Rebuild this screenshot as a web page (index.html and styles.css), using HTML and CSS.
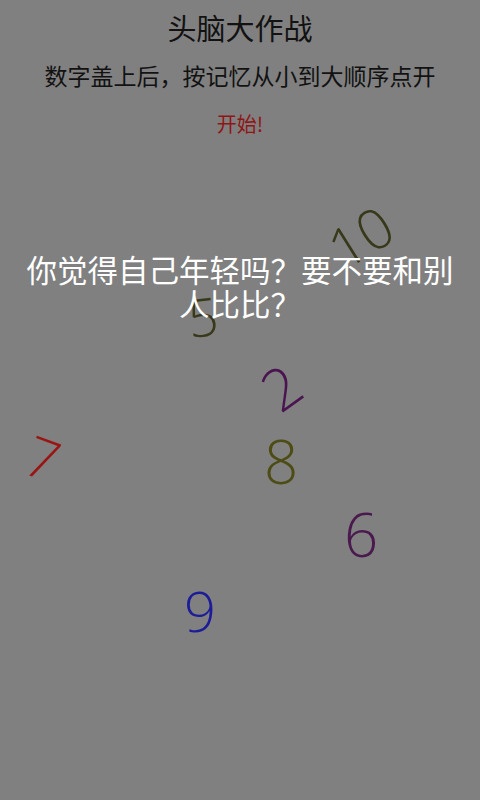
FILE: index.html
```html
<!DOCTYPE html>
<html lang="zh-CN">
<head>
<meta charset="utf-8">
<title>头脑大作战</title>
<link rel="stylesheet" href="styles.css">
</head>
<body>
<div class="screen">
  <header class="header">
    <h1 class="title">头脑大作战</h1>
    <p class="subtitle">数字盖上后，按记忆从小到大顺序点开</p>
    <p class="start">开始!</p>
  </header>
  <main class="board">
    <span class="num n10">10</span>
    <span class="num n5">5</span>
    <span class="num n2">2</span>
    <span class="num n7">7</span>
    <span class="num n8">8</span>
    <span class="num n6">6</span>
    <span class="num n9">9</span>
    <p class="message">你觉得自己年轻吗？要不要和别人比比？</p>
  </main>
</div>
</body>
</html>
```

FILE: styles.css
```css
html, body {
  margin: 0;
  padding: 0;
}
body {
  background: #808080;
  font-family: "Noto Sans CJK SC", "Noto Sans", sans-serif;
}
.screen {
  width: 480px;
  height: 800px;
  display: flex;
  flex-direction: column;
  overflow: hidden;
}
.header {
  display: flex;
  flex-direction: column;
  align-items: center;
  padding-top: 9px;
  height: 141px;
}
.title {
  margin: 0;
  font-size: 29px;
  font-weight: 400;
  line-height: 36px;
  color: #121212;
}
.subtitle {
  margin: 14px 0 0;
  font-size: 23px;
  line-height: 32px;
  color: #121212;
}
.start {
  margin: 19px 0 0;
  font-size: 20px;
  line-height: 28px;
  color: #8e1616;
}
.board {
  position: relative;
  flex: 1;
}
.num {
  position: absolute;
  font-family: "Open Sans", "DejaVu Sans", sans-serif;
  font-weight: 300;
  line-height: 1;
  font-size: 56px;
  transform: translate(-50%, -50%) rotate(var(--r, 0deg));
}
.n10 { left: 360px; top: 86px; --r: -32deg; color: #38381a; }
.n5  { left: 203px; top: 166px; --r: -6deg; color: #38381a; font-size: 53px; }
.n2  { left: 281px; top: 237px; --r: -36deg; color: #4a1450; font-size: 58px; }
.n7  { left: 43px; top: 307px; --r: 20deg; color: #9a1414; }
.n8  { left: 281px; top: 311px; color: #4c4c14; font-size: 60px; }
.n6  { left: 361px; top: 384px; color: #4a1a4e; font-size: 60px; }
.n9  { left: 200px; top: 460px; color: #1c1c98; }
.message {
  position: absolute;
  left: 0;
  right: 0;
  top: 102px;
  margin: 0;
  padding: 0 22px;
  text-align: center;
  font-size: 30.5px;
  line-height: 34px;
  color: #ffffff;
}
```
